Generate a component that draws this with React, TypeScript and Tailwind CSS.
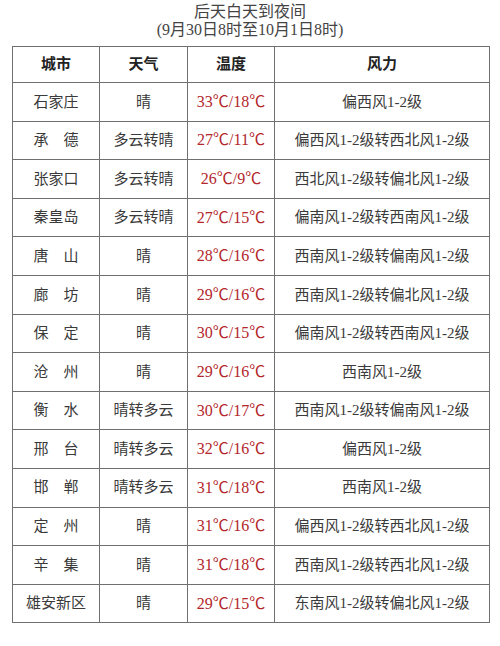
const rows: [string, string, string, string][] = [
  ['石家庄', '晴', '33℃/18℃', '偏西风1-2级'],
  ['承　德', '多云转晴', '27℃/11℃', '偏西风1-2级转西北风1-2级'],
  ['张家口', '多云转晴', '26℃/9℃', '西北风1-2级转偏北风1-2级'],
  ['秦皇岛', '多云转晴', '27℃/15℃', '偏南风1-2级转西南风1-2级'],
  ['唐　山', '晴', '28℃/16℃', '西南风1-2级转偏南风1-2级'],
  ['廊　坊', '晴', '29℃/16℃', '西南风1-2级转偏北风1-2级'],
  ['保　定', '晴', '30℃/15℃', '偏南风1-2级转西南风1-2级'],
  ['沧　州', '晴', '29℃/16℃', '西南风1-2级'],
  ['衡　水', '晴转多云', '30℃/17℃', '西南风1-2级转偏南风1-2级'],
  ['邢　台', '晴转多云', '32℃/16℃', '偏西风1-2级'],
  ['邯　郸', '晴转多云', '31℃/18℃', '西南风1-2级'],
  ['定　州', '晴', '31℃/16℃', '偏西风1-2级转西北风1-2级'],
  ['辛　集', '晴', '31℃/18℃', '西南风1-2级转西北风1-2级'],
  ['雄安新区', '晴', '29℃/15℃', '东南风1-2级转偏北风1-2级'],
];

const font = { fontFamily: '"Liberation Serif", "Noto Sans CJK SC", serif' };

export default function App() {
  return (
    <div className="w-[500px] h-[646px] bg-white text-[#3a3a3a]" style={font}>
      {/* Title */}
      <div className="pt-[3px] text-center text-[16px] leading-[18px] text-[#444]">
        <div>后天白天到夜间</div>
        <div>(9月30日8时至10月1日8时)</div>
      </div>

      {/* Forecast table */}
      <table className="mt-[7px] ml-[12px] w-[478px] border-collapse text-[15px] text-center">
        <thead>
          <tr className="h-[36px]">
            <th className="w-[87px] border-[1.5px] border-[#707070] font-bold text-[#222]">城市</th>
            <th className="w-[88px] border-[1.5px] border-[#707070] font-bold text-[#222]">天气</th>
            <th className="w-[87px] border-[1.5px] border-[#707070] font-bold text-[#222]">温度</th>
            <th className="border-[1.5px] border-[#707070] font-bold text-[#222]">风力</th>
          </tr>
        </thead>
        <tbody>
          {rows.map(([city, weather, temp, wind]) => (
            <tr key={city} className="h-[38.6px]">
              <td className="border-[1.5px] border-[#707070] whitespace-nowrap">{city}</td>
              <td className="border-[1.5px] border-[#707070] whitespace-nowrap">{weather}</td>
              <td className="border-[1.5px] border-[#707070] whitespace-nowrap text-[#b3262b] text-[16px]">{temp}</td>
              <td className="border-[1.5px] border-[#707070] whitespace-nowrap">{wind}</td>
            </tr>
          ))}
        </tbody>
      </table>
    </div>
  );
}
